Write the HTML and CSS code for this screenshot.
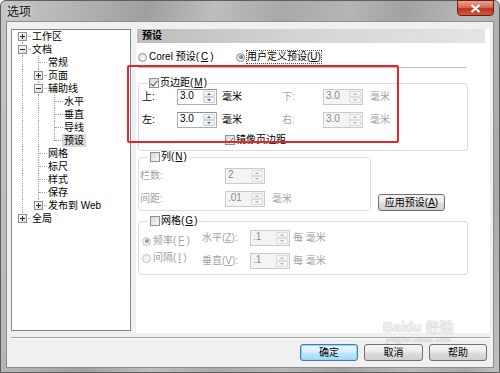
FILE: index.html
```html
<html>
	<head>
		<title>选项</title>
		<meta charset="UTF-8">
		<link rel="stylesheet" href="styles.css">
	</head>
	<body>

		<div class="window">
			<div class="titlebar">
				<span class="title">选项</span>
				<span class="close">
					<svg width="11" height="9" viewBox="0 0 11 9"><path d="M1.5 1 L9.5 8 M9.5 1 L1.5 8" stroke="#fff" stroke-width="2.2" fill="none"/></svg>
				</span>
			</div>

			<div class="client">
				<div class="main">

					<!-- left tree -->
					<div class="tree">
						<div class="row"><span class="c f"><i class="box plus"></i></span><span class="tx">工作区</span></div>
						<div class="row"><span class="c t"><i class="box"></i></span><span class="tx">文档</span></div>
						<div class="row"><span class="c g"></span><span class="c t"></span><span class="tx">常规</span></div>
						<div class="row"><span class="c g"></span><span class="c t"><i class="box plus"></i></span><span class="tx">页面</span></div>
						<div class="row"><span class="c g"></span><span class="c t"><i class="box"></i></span><span class="tx">辅助线</span></div>
						<div class="row"><span class="c g"></span><span class="c g"></span><span class="c t"></span><span class="tx">水平</span></div>
						<div class="row"><span class="c g"></span><span class="c g"></span><span class="c t"></span><span class="tx">垂直</span></div>
						<div class="row"><span class="c g"></span><span class="c g"></span><span class="c t"></span><span class="tx">导线</span></div>
						<div class="row"><span class="c g"></span><span class="c g"></span><span class="c l"></span><span class="tx sel">预设</span></div>
						<div class="row"><span class="c g"></span><span class="c t"></span><span class="tx">网格</span></div>
						<div class="row"><span class="c g"></span><span class="c t"></span><span class="tx">标尺</span></div>
						<div class="row"><span class="c g"></span><span class="c t"></span><span class="tx">样式</span></div>
						<div class="row"><span class="c g"></span><span class="c t"></span><span class="tx">保存</span></div>
						<div class="row"><span class="c g"></span><span class="c l"><i class="box plus"></i></span><span class="tx">发布到 Web</span></div>
						<div class="row"><span class="c l"><i class="box plus"></i></span><span class="tx">全局</span></div>
					</div>

					<!-- right settings page -->
					<div class="panel">
						<div class="phead">预设</div>

						<div class="presets">
							<span class="opt first"><span class="rd"></span>Corel 预设(<u>C</u>)</span>
							<span class="opt"><span class="rd on"></span><span class="focus">用户定义预设(<u>U</u>)</span></span>
						</div>
						<div class="rule"></div>

						<fieldset class="grp g1">
							<legend><span class="cb on"></span>页边距(<u>M</u>)</legend>
							<div class="mgrid">
								<span>上:</span>
								<span class="spin"><span class="val">3.0</span><span class="arr"><i class="up"></i><i class="dn"></i></span></span>
								<span>毫米</span>
								<span class="dis">下:</span>
								<span class="spin off"><span class="val">3.0</span><span class="arr"><i class="up"></i><i class="dn"></i></span></span>
								<span class="dis">毫米</span>

								<span>左:</span>
								<span class="spin"><span class="val">3.0</span><span class="arr"><i class="up"></i><i class="dn"></i></span></span>
								<span>毫米</span>
								<span class="dis">右:</span>
								<span class="spin off"><span class="val">3.0</span><span class="arr"><i class="up"></i><i class="dn"></i></span></span>
								<span class="dis">毫米</span>
							</div>
							<div class="mirror"><span class="cb on soft"></span>镜像页边距</div>
						</fieldset>

						<div class="colrow">
							<fieldset class="grp g2">
								<legend><span class="cb"></span>列(<u>N</u>)</legend>
								<div class="cgrid">
									<span class="dis">栏数:</span>
									<span class="spin off"><span class="val">2</span><span class="arr"><i class="up"></i><i class="dn"></i></span></span>
									<span></span>
									<span class="dis">间距:</span>
									<span class="spin off"><span class="val">.01</span><span class="arr"><i class="up"></i><i class="dn"></i></span></span>
									<span class="dis">毫米</span>
								</div>
							</fieldset>
							<span class="btn apply">应用预设(<u>A</u>)</span>
						</div>

						<fieldset class="grp g3">
							<legend><span class="cb"></span>网格(<u>G</u>)</legend>
							<div class="gbody">
								<div class="gradios">
									<span class="opt dis"><span class="rd on off"></span>频率(<u>F</u>)</span>
									<span class="opt dis"><span class="rd off"></span>间隔(<u>I</u>)</span>
								</div>
								<div class="ggrid">
									<span class="dis">水平(<u>Z</u>):</span>
									<span class="spin off"><span class="val">.1</span><span class="arr"><i class="up"></i><i class="dn"></i></span></span>
									<span class="dis">每 毫米</span>
									<span class="dis">垂直(<u>V</u>):</span>
									<span class="spin off"><span class="val">.1</span><span class="arr"><i class="up"></i><i class="dn"></i></span></span>
									<span class="dis">每 毫米</span>
								</div>
							</div>
						</fieldset>
					</div>
				</div>

				<div class="sep"></div>

				<div class="buttons">
					<span class="btn default">确定</span>
					<span class="btn wide">取消</span>
					<span class="btn">帮助</span>
				</div>
			</div>

			<!-- annotation + watermark lying over the dialog -->
			<div class="mark"></div>
			<div class="wm">
				<span class="wm-big">Baidu 经验</span>
				<span class="wm-url">jingyan.baidu.com</span>
			</div>
		</div>

	</body>
</html>
```

FILE: styles.css
```css
body {
	margin: 0px;
	padding: 0px;
	background: #fff;
	font-family: "Liberation Sans", "Noto Sans CJK SC", sans-serif;
	font-size: 10px;
	line-height: 12px;
	color: #000;
}

u {
	text-decoration: underline;
}

.window {
	position: relative;
	width: 500px;
	height: 373px;
	box-sizing: border-box;
	border: 1px solid #5e5e5e;
	border-radius: 6px 6px 0 0;
	display: flex;
	flex-direction: column;
	background: linear-gradient(100deg, #c6c6c6 0%, #b3b3b3 14%, #9f9f9f 26%, #bdbdbd 38%, #a9a9a9 50%, #b5b5b5 62%, #a2a2a2 72%, #b9b9b9 84%, #a8a8a8 94%, #c2c2c2 100%);
}

/* title bar */
.titlebar {
	height: 20px;
	display: flex;
	justify-content: space-between;
	align-items: center;
	padding-left: 6px;
}
.title {
	font-family: "Noto Sans CJK SC", sans-serif;
	font-size: 12px;
	color: #111;
	text-shadow: 0 0 5px rgba(255,255,255,0.9);
}
.close {
	align-self: flex-start;
	margin-top: -1px;
	margin-right: 5px;
	width: 37px;
	height: 16px;
	box-sizing: border-box;
	border: 1px solid #6a1e16;
	border-radius: 0 0 4px 4px;
	background: linear-gradient(#e9a392 0%, #d66c58 45%, #c0321f 55%, #d2583d 100%);
	display: flex;
	align-items: center;
	justify-content: center;
}

/* client area */
.client {
	flex: 1;
	margin: 0 5px 4px 5px;
	border: 1px solid #8e8e8e;
	background: #f0f0f0;
	display: flex;
	flex-direction: column;
}
.main {
	display: flex;
	gap: 5px;
	margin-top: 7px;
	padding: 0 3px 0 4px;
}

/* tree */
.tree {
	width: 120px;
	height: 302px;
	box-sizing: border-box;
	border: 1px solid #828790;
	background: #fff;
	padding: 0 0 0 2px;
}
.row {
	display: flex;
	height: 13px;
	line-height: 13px;
}
.c {
	position: relative;
	flex: none;
	width: 16px;
	height: 13px;
}
.c::before,
.c::after {
	content: "";
	position: absolute;
}
.g::before,
.t::before {
	left: 8px;
	top: 0;
	height: 13px;
	border-left: 1px dotted #a0a0a0;
}
.l::before {
	left: 8px;
	top: 0;
	height: 7px;
	border-left: 1px dotted #a0a0a0;
}
.f::before {
	left: 8px;
	top: 6px;
	height: 7px;
	border-left: 1px dotted #a0a0a0;
}
.t::after,
.l::after,
.f::after {
	left: 9px;
	top: 6px;
	width: 8px;
	border-top: 1px dotted #a0a0a0;
}
.box {
	position: absolute;
	left: 4px;
	top: 2px;
	width: 9px;
	height: 9px;
	box-sizing: border-box;
	border: 1px solid #919191;
	background: linear-gradient(135deg, #ffffff, #d8d8d8);
	z-index: 1;
}
.box::before {
	content: "";
	position: absolute;
	left: 1px;
	top: 3px;
	width: 5px;
	height: 1px;
	background: #2b2b2b;
}
.box.plus::after {
	content: "";
	position: absolute;
	left: 3px;
	top: 1px;
	width: 1px;
	height: 5px;
	background: #2b2b2b;
}
.tx {
	margin-left: 2px;
	white-space: nowrap;
}
.sel {
	margin-left: 0;
	padding: 0 2px;
	background: #d9d9d9;
}

/* right panel */
.panel {
	width: 354px;
	height: 304px;
	background: #fff;
}
.phead {
	margin-left: 1px;
	width: 343px;
	height: 14px;
	line-height: 14px;
	padding-left: 5px;
	font-weight: bold;
	background: linear-gradient(to right, #bdbdbd, #d6d6d6 50%, #e4e4e4);
}
.presets {
	display: flex;
	height: 12px;
	margin-top: 8px;
	padding-left: 2px;
}
.opt {
	display: flex;
	align-items: center;
	gap: 2px;
	height: 12px;
	white-space: nowrap;
}
.opt.first {
	width: 98px;
}
.focus {
	outline: 1px dotted #555;
	outline-offset: 0;
}
.rule {
	margin: 4px 0 0 2px;
	width: 328px;
	height: 1px;
	background: #bdbdbd;
}

/* radio + checkbox */
.rd {
	position: relative;
	flex: none;
	width: 9px;
	height: 9px;
	box-sizing: border-box;
	border: 1px solid #8e8f8f;
	border-radius: 50%;
	background: radial-gradient(circle at 60% 60%, #ffffff, #d4d4d4);
}
.rd.on::after {
	content: "";
	position: absolute;
	left: 1.5px;
	top: 1.5px;
	width: 4px;
	height: 4px;
	border-radius: 50%;
	background: radial-gradient(circle at 40% 40%, #8fb4e8, #203c72);
}
.rd.off {
	border-color: #c2c2c2;
	background: #f2f2f2;
}
.rd.on.off::after {
	background: #9a9a9a;
}
.cb {
	position: relative;
	flex: none;
	width: 10px;
	height: 10px;
	box-sizing: border-box;
	border: 1px solid #8e8f8f;
	background: linear-gradient(135deg, #d6d6d6, #fbfbfb);
}
.cb.on::after {
	content: "";
	position: absolute;
	left: 2px;
	top: 0px;
	width: 3px;
	height: 6px;
	border: solid #3c4f86;
	border-width: 0 1.5px 1.5px 0;
	transform: rotate(40deg);
}
.cb.soft::after {
	border-color: #6b7694;
}

/* group boxes */
.grp {
	margin: 0;
	padding: 0;
	min-inline-size: 0;
	box-sizing: border-box;
	border: 1px solid #d5dfe5;
	border-radius: 3px;
}
.grp legend {
	display: flex;
	align-items: center;
	gap: 1px;
	height: 12px;
	padding: 0 2px;
}
.g1 {
	margin: 9px 0 0 2px;
	width: 330px;
	padding: 0 0 3px 3px;
}
.g1 legend {
	margin-left: 5px;
}
.mgrid {
	display: grid;
	grid-template-columns: 35px 45px 60px 41px 47px auto;
	grid-auto-rows: 16px;
	row-gap: 7px;
	align-items: center;
}
.mirror {
	display: flex;
	align-items: center;
	gap: 1px;
	height: 14px;
	margin: 5px 0 0 83px;
}
.colrow {
	display: flex;
	align-items: flex-end;
	margin: 0 0 0 2px;
}
.g2 {
	width: 233px;
	padding: 5px 0 3px 1px;
}
.g2 legend {
	margin-left: 8px;
}
.cgrid {
	display: grid;
	grid-template-columns: 85px 47px auto;
	grid-auto-rows: 16px;
	row-gap: 7px;
	align-items: center;
}
.g3 {
	margin: 4px 0 0 2px;
	width: 330px;
	padding: 3px 0 5px 3px;
}
.g3 legend {
	margin-left: 6px;
}
.gbody {
	display: flex;
}
.gradios {
	width: 60px;
	margin-top: 5px;
	display: flex;
	flex-direction: column;
	gap: 5px;
}
.ggrid {
	display: grid;
	grid-template-columns: 48px 43px auto;
	grid-auto-rows: 16px;
	row-gap: 7px;
	align-items: center;
}
.dis {
	color: #a3a3a3;
}

/* spin boxes */
.spin {
	display: flex;
	width: 40px;
	height: 16px;
	box-sizing: border-box;
	border: 1px solid #abadb3;
	border-top-color: #8e8f8f;
	background: #fff;
}
.val {
	flex: 1;
	padding: 0 0 0 2px;
	line-height: 12px;
}
.arr {
	width: 12px;
	display: flex;
	flex-direction: column;
	padding: 1px 1px 1px 0;
}
.arr i {
	position: relative;
	flex: 1;
	border: 1px solid #c9d1da;
	border-radius: 1px;
	background: linear-gradient(#fbfbfb, #e6ebef);
}
.arr i::after {
	content: "";
	position: absolute;
	left: 3px;
	border-left: 2px solid transparent;
	border-right: 2px solid transparent;
}
.arr .up::after {
	top: 1px;
	border-bottom: 2px solid #4d6185;
}
.arr .dn::after {
	top: 1px;
	border-top: 2px solid #4d6185;
}
.spin.off {
	background: #f4f4f4;
	border-color: #cacaca;
	color: #8a8a8a;
}
.spin.off .arr i {
	border-color: #dcdcdc;
	background: #f4f4f4;
}
.spin.off .arr i::after {
	border-top-color: #b5b5b5;
	border-bottom-color: #b5b5b5;
}

/* bottom */
.sep {
	margin: 4px 3px 0 4px;
	border-top: 1px solid #a0a0a0;
	border-bottom: 1px solid #fff;
}
.buttons {
	display: flex;
	justify-content: flex-end;
	gap: 6px;
	margin-top: 5px;
	padding-right: 6px;
}
.btn {
	display: flex;
	align-items: center;
	justify-content: center;
	width: 58px;
	height: 17px;
	box-sizing: border-box;
	border: 1px solid #707070;
	border-radius: 3px;
	background: linear-gradient(#f4f4f4 0%, #ebebeb 48%, #dddddd 52%, #cfcfcf 100%);
	white-space: nowrap;
}
.btn.wide {
	width: 59px;
}
.btn.default {
	border-color: #3c7fb1;
	background: linear-gradient(#eaf6fd 0%, #d9f0fc 48%, #bee6fd 52%, #a7d9f5 100%);
	box-shadow: inset 0 0 0 1px #9ad3f5;
}
.btn.apply {
	width: 67px;
	margin-left: 7px;
}

/* red annotation box */
.mark {
	position: absolute;
	left: 126px;
	top: 64px;
	width: 272px;
	height: 78px;
	box-sizing: border-box;
	border: 2px solid #e8262a;
	border-radius: 2px;
}

/* watermark */
.wm {
	position: absolute;
	left: 382px;
	top: 318px;
	display: flex;
	flex-direction: column;
	align-items: center;
	color: rgba(255,255,255,0.85);
	text-shadow: 0 0 1px rgba(0,0,0,0.4);
	pointer-events: none;
}
.wm-big {
	font-size: 14px;
	line-height: 16px;
	font-weight: bold;
	font-family: "Liberation Sans", "Noto Sans CJK SC", sans-serif;
}
.wm-url {
	font-size: 8px;
	line-height: 9px;
}
```
